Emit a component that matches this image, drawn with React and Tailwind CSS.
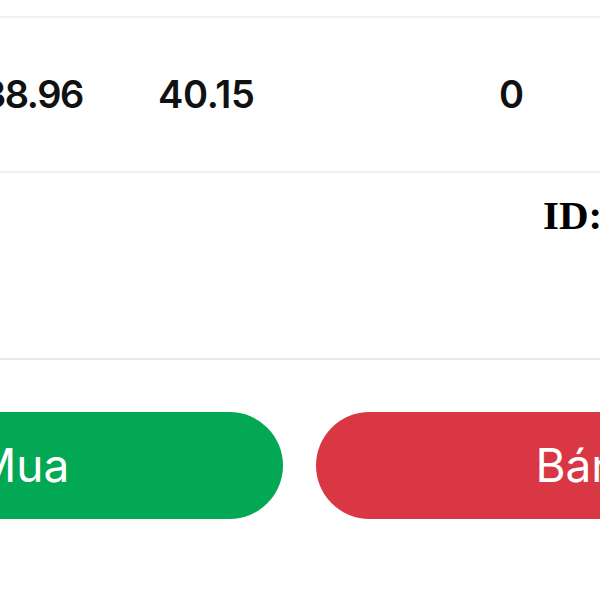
export default function App() {
  return (
    <div className="w-[600px] h-[600px] overflow-hidden bg-white" style={{ fontFamily: 'Inter, "Noto Sans", sans-serif' }}>
      <div className="h-[16px]" />
      <div className="h-[2px] bg-[#f1f1f1]" />

      {/* quote row */}
      <div className="h-[153px] flex items-center text-[38px] font-semibold text-[#111] tracking-[-0.3px] whitespace-nowrap">
        <div className="w-[83px] shrink-0 flex justify-end">
          <span className="tracking-[-1.4px]">38.96</span>
        </div>
        <div className="w-[75px] shrink-0" />
        <span className="w-[96px] shrink-0">40.15</span>
        <div className="w-[245px] shrink-0" />
        <span>0</span>
      </div>

      <div className="h-[2px] bg-[#efefef]" />

      {/* account section */}
      <div className="h-[185px] pt-[22px] pl-[543px] whitespace-nowrap">
        <span
          className="text-[41px] font-bold text-black leading-none"
          style={{ fontFamily: '"Liberation Serif", "Times New Roman", serif' }}
        >
          ID:
        </span>
      </div>

      <div className="h-[2px] bg-[#e9e9e9]" />

      {/* actions */}
      <div className="pt-[52px] flex gap-[33px] ml-[-239px] w-[1100px]">
        <button className="w-[522px] h-[107px] shrink-0 rounded-full bg-[#03a854] text-white text-[46px] font-normal flex items-center justify-center">
          Mua
        </button>
        <button className="w-[522px] h-[107px] shrink-0 rounded-full bg-[#d93744] text-white text-[46px] font-normal flex items-center justify-center">
          Bán
        </button>
      </div>
    </div>
  )
}
